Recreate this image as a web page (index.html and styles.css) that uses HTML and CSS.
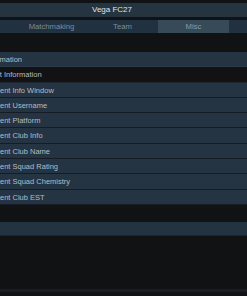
FILE: index.html
```html
<!DOCTYPE html>
<html lang="en">
<head>
    <meta charset="UTF-8">
    <meta name="viewport" content="width=device-width, initial-scale=1.0">
    <title>Vega FC27</title>
    <link rel="stylesheet" href="styles.css">
</head>
<body>

    <div class="window">
        <div class="title">Vega FC27</div>

        <div class="tabs">
            <div class="tab">Matchmaking</div>
            <div class="tab">Team</div>
            <div class="tab active">Misc</div>
        </div>

        <div class="list">
            <div class="row head">Information</div>
            <div class="row sub">Opponent Information</div>
            <div class="row item">Opponent Info Window</div>
            <div class="row item">Opponent Username</div>
            <div class="row item">Opponent Platform</div>
            <div class="row item">Opponent Club Info</div>
            <div class="row item">Opponent Club Name</div>
            <div class="row item">Opponent Squad Rating</div>
            <div class="row item">Opponent Squad Chemistry</div>
            <div class="row item">Opponent Club EST</div>
        </div>

        <div class="band"></div>

        <div class="footer"></div>
    </div>

</body>
</html>
```

FILE: styles.css
```css
* {
    margin: 0;
    padding: 0;
    box-sizing: border-box;
}

body {
    width: 247px;
    height: 296px;
    overflow: hidden;
    background-color: #111214;
    font-family: "Liberation Sans", Arial, sans-serif;
    font-size: 7.5px;
}

.window {
    padding-top: 3px;
}

.title {
    height: 14px;
    line-height: 14px;
    background-color: #243441;
    color: #e2e4e6;
    text-align: center;
    padding-right: 23px; /* title sits a bit left of centre */
    font-size: 8px;
}

.tabs {
    display: flex;
    height: 13px;
    margin-top: 3px;
    padding-left: 16px;
    background-color: #213140;
}

.tab {
    width: 71px;
    line-height: 13px;
    text-align: center;
    color: #7c8c98;
    font-size: 7.7px;
}

.tab.active {
    background-color: #364a58;
    color: #8a9aa6;
}

.list {
    margin-top: 19px;
    margin-left: -40px; /* the list is cut off on the left */
}

.row {
    height: 15.3px;
    line-height: 15px;
    background-color: #243442;
    border-bottom: 1px solid #171b26;
    color: #b4bcc4;
    white-space: nowrap;
}

.row.head {
    padding-left: 24.5px;
    border-bottom-color: #2c3b48;
}

.row.sub {
    padding-left: 9px;
    background-color: #121214;
    border-bottom-color: #1d2530;
}

.row.item {
    padding-left: 17.5px;
}

.band {
    height: 14px;
    margin-top: 17px;
    background-color: #223341;
    border-bottom: 1px solid #1a2530;
}

.footer {
    height: 3px;
    margin-top: 53px;
    background-color: #1c1d20;
}
```
